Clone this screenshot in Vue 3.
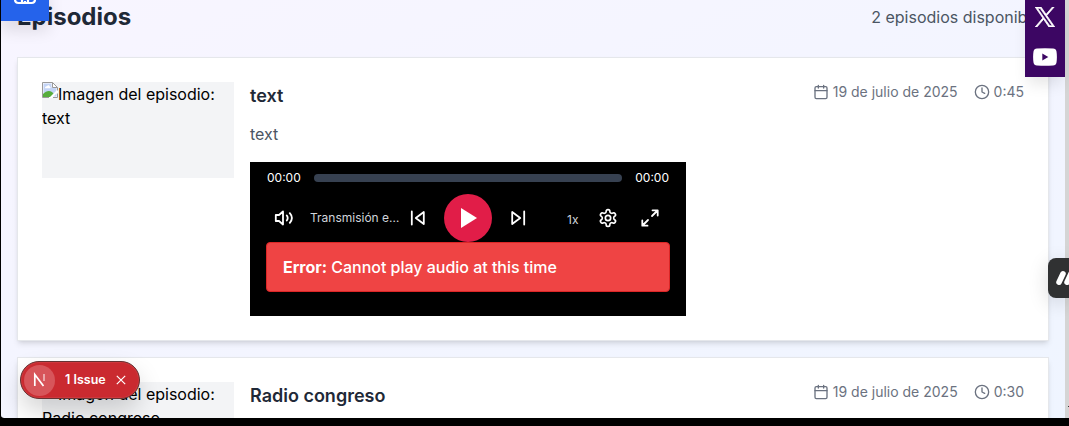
<script setup>
const episodes = [
  { title: 'text', description: 'text', date: '19 de julio de 2025', duration: '0:45', player: true },
  { title: 'Radio congreso', description: '', date: '19 de julio de 2025', duration: '0:30', player: false },
]
</script>

<template>
  <div class="window">
    <main class="page">
      <header class="heading">
        <h2>Episodios</h2>
        <span>2 episodios disponibles</span>
      </header>

      <article v-for="ep in episodes" :key="ep.title" class="card">
        <div class="thumb">
          <svg class="broken" width="16" height="16" viewBox="0 0 16 16">
            <path d="M.5.5h10l5 5v10H.5z" fill="#fff" />
            <path d="M1.500 1.500h8v4h5v9h-13z" fill="#c3d4f6" />
            <path d="M3 5.800c0-1.200 1-1.800 2-1.600.6-1.500 2.800-1 2.800.5 1 .2 1 1.300.4 1.600H3.200z" fill="#fff" />
            <path d="M1 15v-3c3-3 6-4 9-2l2 2-3 3z" fill="#57ad3c" />
            <path d="M7 16l9-9v3l-6 6z" fill="#fff" />
            <path d="M.5 15.500V.5h10l5 5v3M10.500.5v5h5M.5 15.500H7m4 0h4.500v-4" fill="none" stroke="#9a9a9a" />
          </svg>Imagen del episodio: {{ ep.title }}
        </div>
        <div class="body">
          <div class="top">
            <h3>{{ ep.title }}</h3>
            <div class="meta">
              <svg width="16" height="16" viewBox="0 0 24 24" class="line"><path d="M8 2v4M16 2v4M3 10h18" /><rect x="3" y="4" width="18" height="18" rx="2" /></svg>
              <span class="date">{{ ep.date }}</span>
              <svg width="16" height="16" viewBox="0 0 24 24" class="line"><circle cx="12" cy="12" r="10" /><path d="M12 6v6l4 2" /></svg>
              <span>{{ ep.duration }}</span>
            </div>
          </div>
          <p class="description">{{ ep.description }}</p>

          <section v-if="ep.player" class="player">
            <div class="progress">
              <span>00:00</span>
              <div class="track"></div>
              <span>00:00</span>
            </div>
            <div class="controls">
              <svg class="icon volume" width="20" height="20" viewBox="0 0 20 20">
                <path d="M1.800 7v6h3.200l4 3.500v-13L5 7z" /><path d="M12.800 7.500q1.800 2.500 0 5M15.800 5.200q4.200 4.800 0 9.600" />
              </svg>
              <span class="track-name">Transmisión en vivo</span>
              <svg class="icon previous" width="16" height="16" viewBox="0 0 16 16"><path d="M1.800 1.500v13M13.800 2v12L5.800 8z" /></svg>
              <button class="play" aria-label="Reproducir">
                <svg width="18" height="22" viewBox="0 0 18 22"><path d="M1 1l16 10L1 21z" fill="#fff" /></svg>
              </button>
              <svg class="icon next" width="16" height="16" viewBox="0 0 16 16"><path d="M14.200 1.500v13M2.200 2v12L10.200 8z" /></svg>
              <span class="speed">1x</span>
              <svg class="icon gear" width="20" height="20" viewBox="0 0 24 24">
                <path d="M12.220 2h-.44a2 2 0 0 0-2 2v.18a2 2 0 0 1-1 1.730l-.43.25a2 2 0 0 1-2 0l-.15-.08a2 2 0 0 0-2.730.73l-.22.38a2 2 0 0 0 .73 2.730l.15.1a2 2 0 0 1 1 1.720v.51a2 2 0 0 1-1 1.740l-.15.09a2 2 0 0 0-.73 2.730l.22.38a2 2 0 0 0 2.730.73l.15-.08a2 2 0 0 1 2 0l.43.25a2 2 0 0 1 1 1.730V20a2 2 0 0 0 2 2h.44a2 2 0 0 0 2-2v-.18a2 2 0 0 1 1-1.730l.43-.25a2 2 0 0 1 2 0l.15.08a2 2 0 0 0 2.730-.73l.22-.39a2 2 0 0 0-.73-2.730l-.15-.08a2 2 0 0 1-1-1.740v-.5a2 2 0 0 1 1-1.740l.15-.09a2 2 0 0 0 .73-2.730l-.22-.38a2 2 0 0 0-2.730-.73l-.15.08a2 2 0 0 1-2 0l-.43-.25a2 2 0 0 1-1-1.730V4a2 2 0 0 0-2-2z" /><circle cx="12" cy="12" r="3.200" />
              </svg>
              <svg class="icon expand" width="20" height="20" viewBox="0 0 20 20"><path d="M12 8l5.500-5.500M12.500 2.300h5.200v5.200M8 12l-5.500 5.500M2.300 12.500v5.200h5.200" /></svg>
            </div>
            <div class="error"><strong>Error:</strong> Cannot play audio at this time</div>
          </section>
        </div>
      </article>
    </main>

    <div class="scrollbar"><i></i></div>

    <div class="tool">
      <svg width="24" height="24" viewBox="0 0 24 24"><path d="M2 10v7.500q0 3.500 3.500 3.500h13q3.500 0 3.500-3.500V10M9 17v3M12 19v2M15 17v3M8 15v3M16 15v3" /></svg>
    </div>

    <div class="social">
      <svg class="x-logo" width="20" height="20" viewBox="0 0 24 24"><path d="M14.200 10.200L23 0h-2.100l-7.600 8.800L7.200 0H.2l9.200 13.300L.2 24h2.100l8-9.300 6.400 9.300h7zm-2.900 3.300l-.9-1.300L3 1.600h3.200l6 8.500.9 1.300 7.800 11.100h-3.200z" fill="#fff" stroke="#fff" stroke-width=".9" /></svg>
      <svg width="24" height="18" viewBox="0 0 24 18"><path d="M4 .6Q12-.3 20 .6q3 .2 3.500 3 .8 5.400 0 10.800-.5 2.800-3.500 3-8 .7-16 0-3-.2-3.500-3-.8-5.400 0-10.800Q1 .8 4 .6z" fill="#fff" /><path d="M9.300 5.500v7l6-3.500z" fill="#3c0663" /></svg>
    </div>

    <div class="side-widget">
      <svg width="21" height="40" viewBox="0 0 21 40"><path d="M11 24.200l4-8.400M19 24.200l4-8.400" stroke="#fff" stroke-width="5.500" stroke-linecap="round" /></svg>
    </div>

    <div class="issue">
      <span class="badge"><svg width="16" height="16" viewBox="0 0 16 16"><path d="M2.800 14V2.500L11.500 14" fill="none" stroke="#fff" stroke-width="1.700" /><path d="M12 2v7" stroke="#fff" stroke-width="1.500" opacity=".65" /></svg></span>
      <span class="issue-text">1 Issue</span>
      <svg class="close" width="10" height="10" viewBox="0 0 10 10"><path d="M.8.8l8.400 8.400M9.200.8L.8 9.200" stroke="#fff" stroke-width="1.200" /></svg>
    </div>
  </div>
</template>

<style>
html, body { margin: 0; overflow: hidden; background: #000; }
</style>

<style scoped>
* { box-sizing: border-box; }
svg { display: block; flex: none; }
h2, h3, p { margin: 0; }
.window { position: relative; width: 1069px; height: 418px; padding-left: 1px; display: flex; overflow: hidden; font: 16px/24px Inter, sans-serif; color: #000; background: #000; border-radius: 0 0 0 4px; }
.page { width: 1064px; height: 418px; padding: 0 16px; overflow: hidden; border-bottom-left-radius: 3px; background: linear-gradient(to bottom right, #f8f5ff, #eff5ff); }
.heading { height: 57px; display: flex; justify-content: space-between; color: #4b5563; padding-top: 1px; }
.heading h2 { font-size: 24px; line-height: 32px; font-weight: 700; color: #1f2937; }
.heading span { line-height: 32px; }
.card { height: 284px; margin-bottom: 16px; padding: 24px; display: flex; gap: 16px; background: #fff; border: 1px solid #e5e7eb; box-shadow: 0 4px 6px -1px #0000001a, 0 2px 4px -2px #0000001a; }
.thumb { width: 192px; height: 96px; background: #f3f4f6; overflow: hidden; flex: none; }
.broken { display: inline-block; vertical-align: top; }
.body { flex: 1; min-width: 0; }
.top { display: flex; justify-content: space-between; height: 40px; }
h3 { font-size: 18px; line-height: 28px; font-weight: 600; color: #1f2937; }
.meta { display: flex; align-items: center; height: 20px; color: #6b7280; font-size: 14px; line-height: 20px; gap: 4px; }
.date { margin-right: 12px; }
.line, .icon { fill: none; stroke: currentColor; stroke-width: 2; stroke-linecap: round; stroke-linejoin: round; }
.description { height: 24px; margin-bottom: 16px; color: #4b5563; }
.player { width: 436px; height: 154px; padding: 8px 16px 24px; background: #000; color: #fff; }
.progress { height: 16px; display: flex; align-items: center; gap: 13px; padding: 0 1px; font-size: 12px; }
.track { flex: 1; height: 8px; border-radius: 4px; background: #374151; }
.controls { height: 56px; padding-top: 8px; display: flex; align-items: center; }
.icon { stroke-width: 1.8; }
.volume { margin-left: 8px; }
.track-name { width: 90px; margin-left: 16px; font-size: 12px; color: #d1d5db; white-space: nowrap; overflow: hidden; text-overflow: ellipsis; }
.previous { margin-left: 10px; }
.play { width: 48px; height: 48px; margin: 0 18px; padding: 0 0 0 1px; display: flex; align-items: center; justify-content: center; border: 0; border-radius: 50%; background: #e11d48; }
.speed { width: 13px; margin-left: 41px; padding-top: 3px; font-size: 12px; color: #d1d5db; }
.gear { margin-left: 18px; stroke-width: 2; }
.expand { margin-left: 22px; }
.error { height: 50px; padding: 12px 16px; background: #ef4444; border: 1px solid #dc2626; border-radius: 4px; font-weight: 500; letter-spacing: -0.02px; }
.error strong { font-weight: 700; }
.scrollbar { width: 4px; height: 418px; padding: 406px 0 0 3px; background: #d5d5d5; }
.scrollbar i { display: block; width: 1px; height: 1px; background: #333; }
.tool { position: absolute; left: 1px; top: -19px; width: 48px; height: 40px; padding: 1px 12px; background: #2563eb; box-shadow: 0 10px 15px #0000001a; }
.tool path { fill: none; stroke: #fff; stroke-width: 2.2; }
.social { position: absolute; left: 1025px; top: 0; width: 40px; height: 77px; padding-top: 7px; display: flex; flex-direction: column; align-items: center; gap: 21px; background: #3c0663; box-shadow: 0 10px 15px -3px #0000001a; }
.side-widget { position: absolute; left: 1048px; top: 258px; width: 21px; height: 40px; background: #303132; border-radius: 8px 0 0 8px; box-shadow: 0 5px 20px #00000026; overflow: hidden; }
.issue { position: absolute; left: 20px; top: 361px; width: 120px; height: 38px; padding-left: 3px; display: flex; align-items: center; border: 1px solid #633; border-radius: 19px; background: #ca2a30; color: #fff; font-size: 12.5px; font-weight: 600; box-shadow: inset 0 0 0 1px #cf383d, 0 12px 24px #0000002b; }
.badge { width: 31px; height: 31px; margin-right: 10px; display: flex; align-items: center; justify-content: center; border-radius: 50%; background: #d7555a; }
.issue-text { width: 42px; white-space: nowrap; }
.close { margin-left: 9px; }
</style>
